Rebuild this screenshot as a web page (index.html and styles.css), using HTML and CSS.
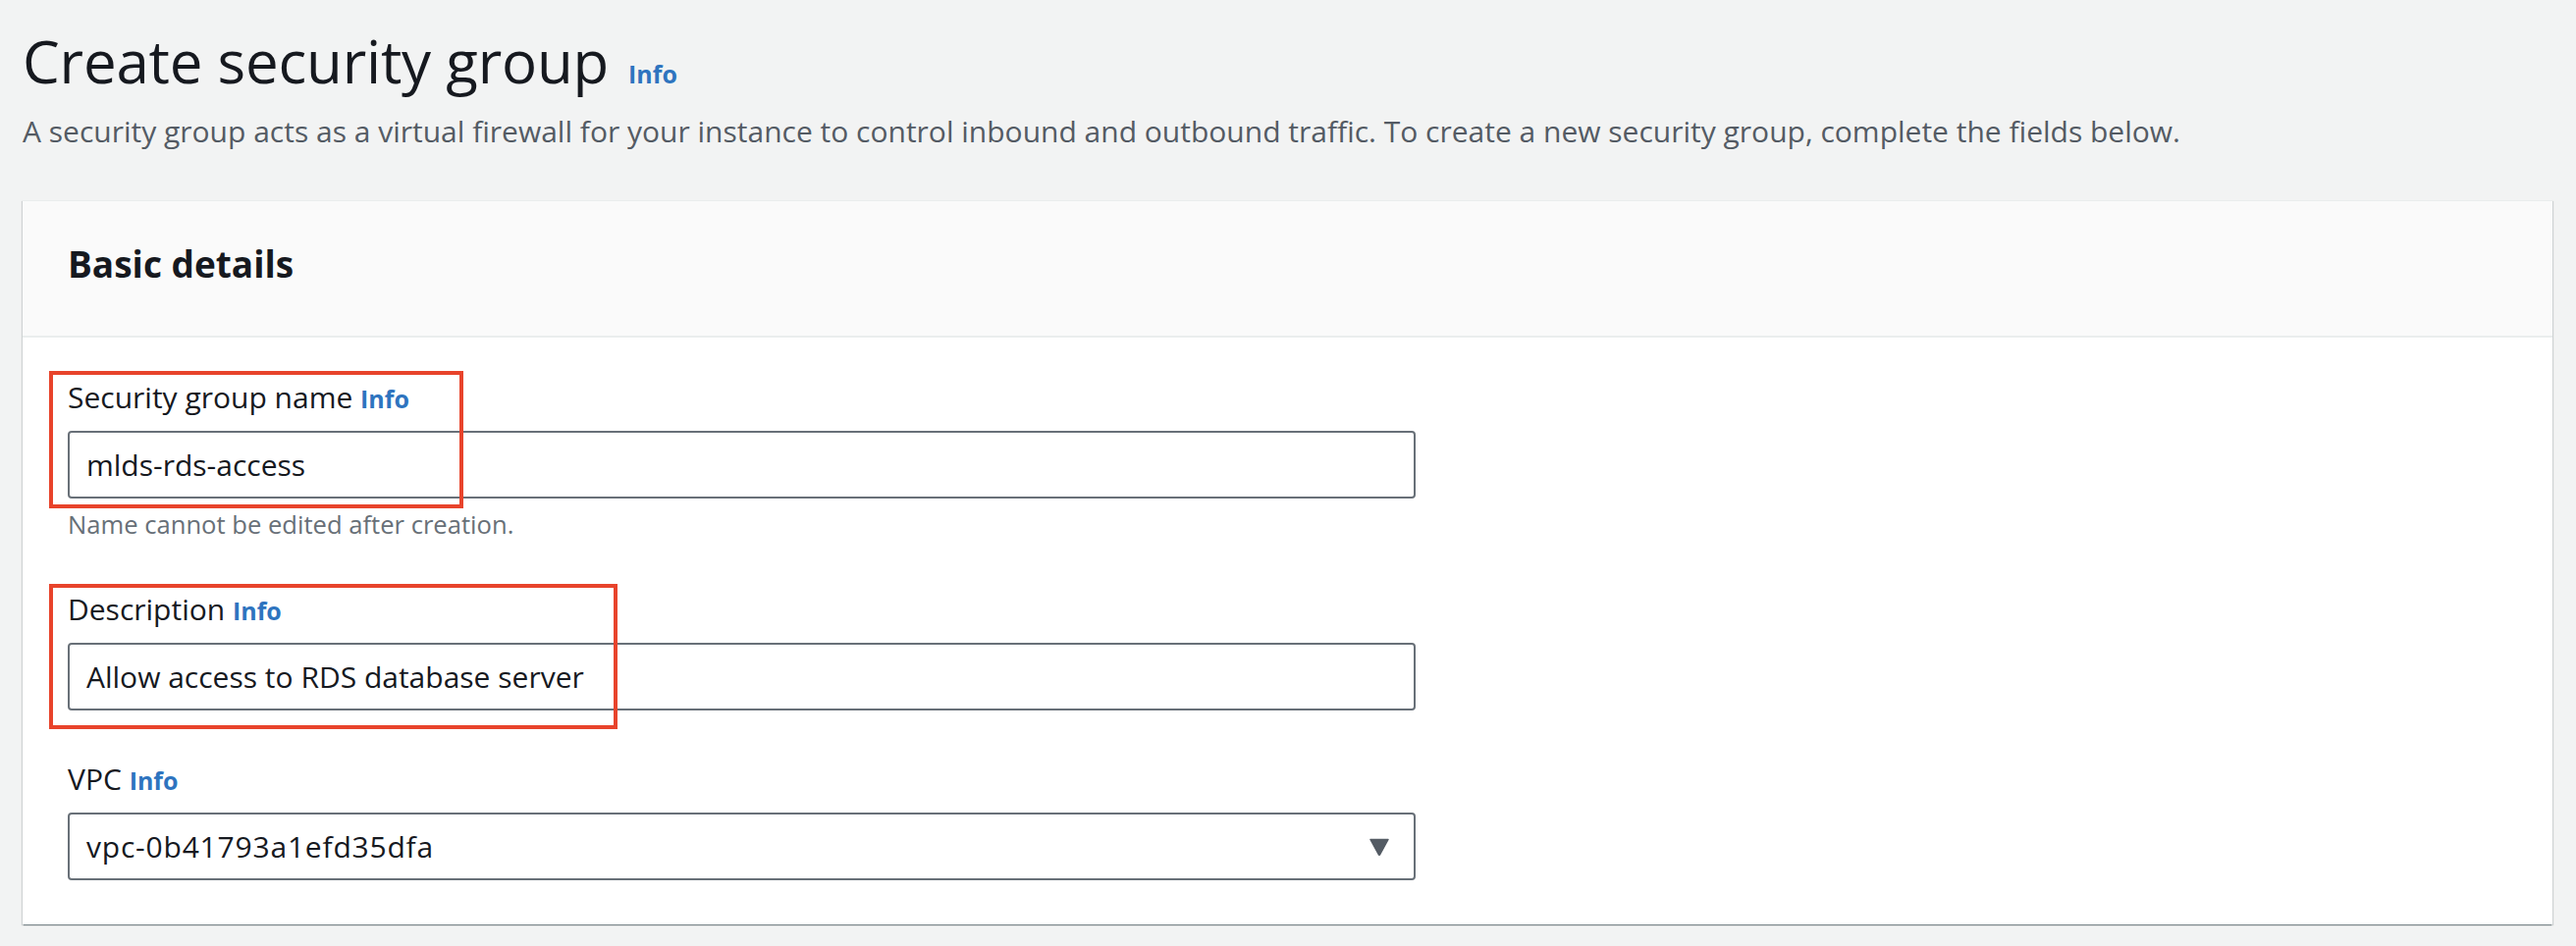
FILE: index.html
```html
<!DOCTYPE html>
<html lang="en">
<head>
<meta charset="utf-8">
<title>Create security group</title>
<link rel="stylesheet" href="styles.css">
</head>
<body>
<main class="page">
  <header class="page-header">
    <h1 class="page-title">Create security group<a class="info info-title" href="#">Info</a></h1>
    <p class="page-desc">A security group acts as a virtual firewall for your instance to control inbound and outbound traffic. To create a new security group, complete the fields below.</p>
  </header>

  <section class="panel">
    <div class="panel-head">
      <h2 class="panel-title">Basic details</h2>
    </div>
    <div class="panel-body">
      <div class="field">
        <label class="field-label">Security group name <a class="info" href="#">Info</a></label>
        <div class="input">mlds-rds-access</div>
        <div class="hint">Name cannot be edited after creation.</div>
      </div>
      <div class="field">
        <label class="field-label">Description <a class="info" href="#">Info</a></label>
        <div class="input">Allow access to RDS database server</div>
      </div>
      <div class="field">
        <label class="field-label">VPC <a class="info" href="#">Info</a></label>
        <div class="input select">
          <span class="select-value">vpc-0b41793a1efd35dfa</span>
          <svg class="caret" width="22" height="18" viewBox="0 0 22 18"><path d="M2 1.5 L20 1.5 L11.8 16.5 Q11 17.8 10.2 16.5 Z" fill="#545b64" stroke="#545b64" stroke-width="1.5" stroke-linejoin="round"/></svg>
        </div>
      </div>
    </div>
    <div class="mark mark-name"></div>
    <div class="mark mark-desc"></div>
  </section>
</main>
</body>
</html>
```

FILE: styles.css
```css
* { box-sizing: border-box; }
html, body { margin: 0; padding: 0; }
body {
  background: #f2f3f3;
  font-family: "Open Sans", "Noto Sans", sans-serif;
  color: #16191f;
  width: 2624px;
  height: 964px;
  overflow: hidden;
}
.page {
  padding: 26px 24px 0 23px;
}
.page-title {
  margin: 0;
  font-size: 60px;
  line-height: 72px;
  font-weight: 400;
  letter-spacing: -0.2px;
  color: #16191f;
}
.info {
  color: #2e74bf;
  font-weight: 700;
  font-size: 25px;
  text-decoration: none;
  letter-spacing: 0;
}
.info-title {
  margin-left: 20px;
}
.page-desc {
  margin: 3px 0 0 0;
  font-size: 30px;
  line-height: 40px;
  color: #545b64;
}
.panel {
  position: relative;
  margin-top: 50px;
  background: #fff;
  box-shadow: 0 2px 1px -1px rgba(0, 28, 36, 0.3), 1px 1px 1px 0 rgba(0, 28, 36, 0.15), -1px 1px 1px 0 rgba(0, 28, 36, 0.15);
  border-top: 1px solid #eaeded;
}
.panel-head {
  background: #fafafa;
  border-bottom: 2px solid #eaeded;
  padding: 40px 46px 49px;
}
.panel-title {
  margin: 0;
  font-size: 37px;
  line-height: 48px;
  font-weight: 700;
  color: #16191f;
}
.panel-body {
  padding: 41px 46px 45px;
  display: flex;
  flex-direction: column;
  gap: 50px;
}
.field {
  display: flex;
  flex-direction: column;
  width: 1373px;
}
.field-label {
  font-size: 30px;
  line-height: 40px;
  color: #16191f;
  margin-bottom: 13px;
}
.input {
  height: 69px;
  border: 2px solid #687078;
  border-radius: 4px;
  padding: 0 24px 0 17px;
  font-size: 30px;
  line-height: 65px;
  color: #16191f;
  background: #fff;
}
.select {
  display: flex;
  align-items: center;
  justify-content: space-between;
}
.select-value {
  letter-spacing: 0.8px;
}
.caret { display: block; }
.hint {
  margin-top: 11px;
  font-size: 25.6px;
  line-height: 32px;
  color: #687078;
}
.mark {
  position: absolute;
  left: 27px;
  border: 4px solid #e8432b;
}
.mark-name {
  top: 173px;
  width: 422px;
  height: 140px;
}
.mark-desc {
  top: 390px;
  width: 579px;
  height: 148px;
}
```
